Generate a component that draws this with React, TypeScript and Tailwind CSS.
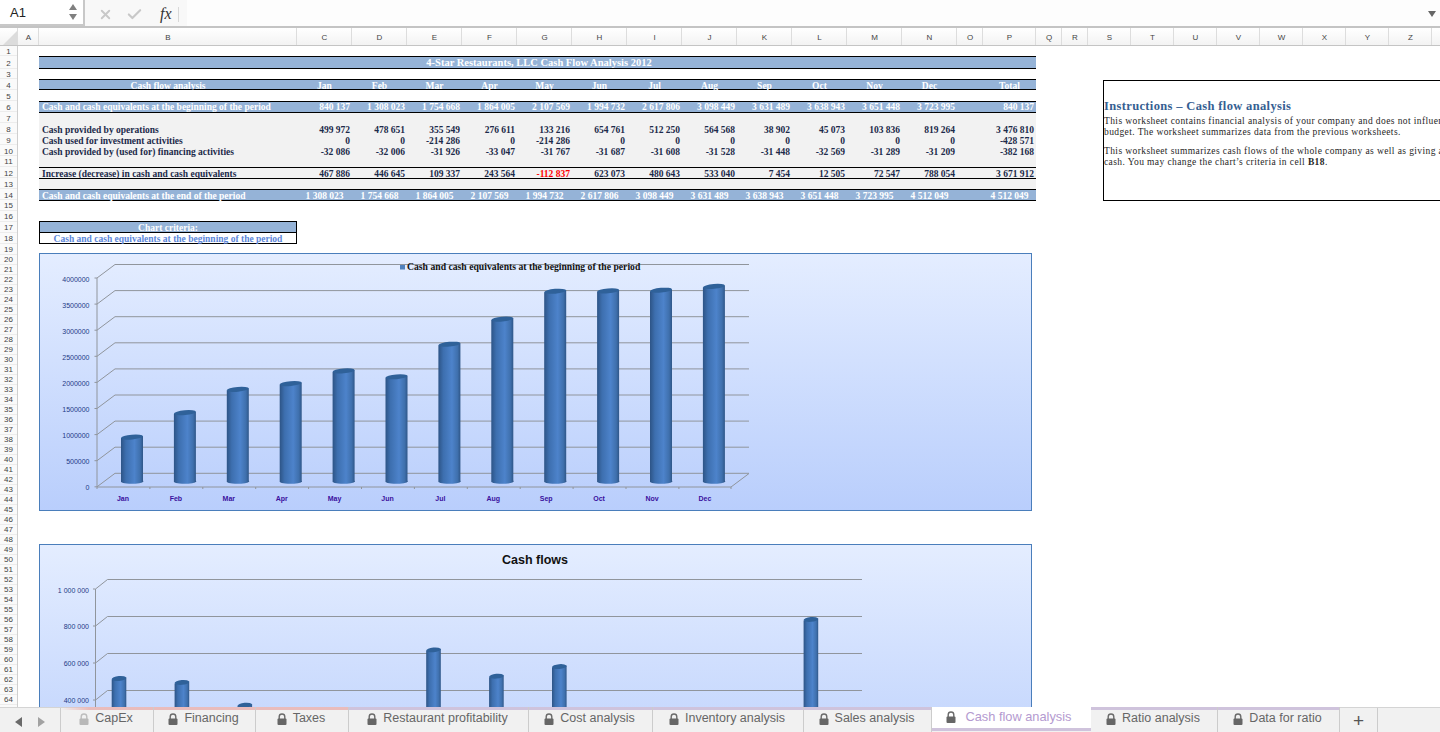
import { type FC } from "react";
import { Check, X } from "lucide-react";

const serif = "font-['Liberation_Serif',serif]";
const sans = "font-['Liberation_Sans',sans-serif]";

const COLUMNS = [
  { name: "A", cls: "w-[21px]" },
  { name: "B", cls: "w-[258px]" },
  { name: "C", cls: "w-[55px]" },
  { name: "D", cls: "w-[55px]" },
  { name: "E", cls: "w-[55px]" },
  { name: "F", cls: "w-[55px]" },
  { name: "G", cls: "w-[55px]" },
  { name: "H", cls: "w-[55px]" },
  { name: "I", cls: "w-[55px]" },
  { name: "J", cls: "w-[55px]" },
  { name: "K", cls: "w-[55px]" },
  { name: "L", cls: "w-[55px]" },
  { name: "M", cls: "w-[55px]" },
  { name: "N", cls: "w-[55px]" },
  { name: "O", cls: "w-[26px]" },
  { name: "P", cls: "w-[53px]" },
  { name: "Q", cls: "w-[26px]" },
  { name: "R", cls: "w-[26px]" },
  { name: "S", cls: "w-[43px]" },
  { name: "T", cls: "w-[43px]" },
  { name: "U", cls: "w-[43px]" },
  { name: "V", cls: "w-[43px]" },
  { name: "W", cls: "w-[43px]" },
  { name: "X", cls: "w-[43px]" },
  { name: "Y", cls: "w-[43px]" },
  { name: "Z", cls: "w-[43px]" },
];

const ROW_NUMBERS = Array.from({ length: 64 }, (_, i) => i + 1);

const MONTHS = ["Jan", "Feb", "Mar", "Apr", "May", "Jun", "Jul", "Aug", "Sep", "Oct", "Nov", "Dec"];

const BEGINNING = ["840 137", "1 308 023", "1 754 668", "1 864 005", "2 107 569", "1 994 732", "2 617 806", "3 098 449", "3 631 489", "3 638 943", "3 651 448", "3 723 995"];
const OPERATIONS = ["499 972", "478 651", "355 549", "276 611", "133 216", "654 761", "512 250", "564 568", "38 902", "45 073", "103 836", "819 264"];
const INVESTMENT = ["0", "0", "-214 286", "0", "-214 286", "0", "0", "0", "0", "0", "0", "0"];
const FINANCING = ["-32 086", "-32 006", "-31 926", "-33 047", "-31 767", "-31 687", "-31 608", "-31 528", "-31 448", "-32 569", "-31 289", "-31 209"];
const INCREASE = ["467 886", "446 645", "109 337", "243 564", "-112 837", "623 073", "480 643", "533 040", "7 454", "12 505", "72 547", "788 054"];
const ENDING = ["1 308 023", "1 754 668", "1 864 005", "2 107 569", "1 994 732", "2 617 806", "3 098 449", "3 631 489", "3 638 943", "3 651 448", "3 723 995", "4 512 049"];

const BEGIN_VALUES = [840137, 1308023, 1754668, 1864005, 2107569, 1994732, 2617806, 3098449, 3631489, 3638943, 3651448, 3723995];
const FLOW_VALUES = [499972, 478651, 355549, 276611, 133216, 654761, 512250, 564568, 38902, 45073, 103836, 819264];

const TABS = [
  { label: "CapEx", w: "w-[93px]", strip: "bg-gradient-to-r from-transparent to-[#e9bcbc] to-30%", faded: true },
  { label: "Financing", w: "w-[102px]", strip: "bg-[#e9bcbc]" },
  { label: "Taxes", w: "w-[93px]", strip: "bg-[#e9bcbc]" },
  { label: "Restaurant profitability", w: "w-[180px]", strip: "bg-[#cfc3dc]" },
  { label: "Cost analysis", w: "w-[124px]", strip: "bg-[#cfc3dc]" },
  { label: "Inventory analysis", w: "w-[151px]", strip: "bg-[#cfc3dc]" },
  { label: "Sales analysis", w: "w-[128px]", strip: "bg-[#cfc3dc]" },
  { label: "Cash flow analysis", w: "w-[159px]", strip: "", active: true },
  { label: "Ratio analysis", w: "w-[127px]", strip: "bg-[#cfc3dc]" },
  { label: "Data for ratio", w: "w-[122px]", strip: "bg-[#cfc3dc]" },
];

const Lock: FC<{ faded?: boolean }> = ({ faded }) => (
  <svg width="10" height="12" viewBox="0 0 10 12" className="shrink-0">
    <path d="M2.2 6V3.8a2.8 2.8 0 0 1 5.6 0V6" fill="none" stroke={faded ? "#bdbdbd" : "#6a6a6a"} strokeWidth="1.4" />
    <rect x="0.5" y="5.5" width="9" height="6.5" rx="1" fill={faded ? "#b8b8b8" : "#666666"} />
  </svg>
);

const FormulaBar = () => (
  <div className="flex h-[28px] items-start border-b-2 border-[#c4c4c4] bg-[#f8f8f8]">
    <div className={`${sans} flex h-[26px] w-[85px] items-center justify-between border-r-2 border-b-2 border-[#c8c8c8] bg-white pt-[2px] pr-[5px] pl-[10px] text-[13px] text-[#222]`}>
      A1
      <svg width="10" height="18" viewBox="0 0 10 18" className="mt-[-2px]">
        <path d="M5 1 9 7H1z" fill="#808080" />
        <path d="M5 17 9 11H1z" fill="#808080" />
      </svg>
    </div>
    <div className="flex h-[26px] w-[102px] items-center pt-[2px] pl-[13px]">
      <X size={15} strokeWidth={3} className="text-[#c8c8c8]" />
      <Check size={17} strokeWidth={3} className="ml-[13px] text-[#c8c8c8]" />
      <span className={`${serif} ml-[17px] text-[16px] text-[#333] italic`}>fx</span>
      <span className="ml-[6px] h-[15px] w-px bg-[#d8d8d8]" />
    </div>
    <div className="flex h-[26px] flex-1 items-center justify-end bg-[#fdfdfd] pt-[2px] pr-[4px]">
      <svg width="8" height="6" viewBox="0 0 8 6">
        <path d="M0 0h8L4 6z" fill="#666666" />
      </svg>
    </div>
  </div>
);

const ColumnHeaders = () => (
  <div className={`${sans} flex h-[18px] border-b border-[#c4c4c4] bg-gradient-to-b from-white to-[#f3f3f3] text-[8px] text-[#444]`}>
    <div className="flex w-[18px] shrink-0 items-end justify-end border-r border-[#dddddd]">
      <svg width="14" height="14" viewBox="0 0 14 14">
        <path d="M14 0v14H0z" fill="#dcdcdc" />
      </svg>
    </div>
    {COLUMNS.map((c) => (
      <div key={c.name} className={`${c.cls} flex shrink-0 items-center justify-center border-r border-[#dddddd] pt-[3px] pl-px`}>
        {c.name}
      </div>
    ))}
  </div>
);

const rowNumberClass = (n: number) => {
  if (n === 2) return "h-[13px] pt-[4px]";
  if (n === 1 || n === 3) return "h-[10px] pt-[2px]";
  if (n >= 20) return "h-[10px] pt-px";
  if (n === 11 || n >= 15) return "h-[11px] pt-[2px]";
  return "h-[11px] pt-[3px]";
};

const RowNumbers = () => (
  <div className={`${sans} w-[18px] shrink-0 border-r border-[#cfcfcf] bg-[#fafafa] text-[8px] leading-none text-[#444]`}>
    {ROW_NUMBERS.map((n) => (
      <div key={n} className={`border-b border-[#ececec] text-center ${rowNumberClass(n)}`}>
        {n}
      </div>
    ))}
  </div>
);

const Cells: FC<{ values: string[]; last: string; align?: string; redIndex?: number }> = ({
  values,
  last,
  align = "text-right pr-[2px]",
  redIndex,
}) => (
  <>
    {values.map((v, i) => (
      <div key={i} className={`${align} ${i === redIndex ? "text-[#ff0000]" : ""}`}>
        {v}
      </div>
    ))}
    <div />
    <div className={align}>{last}</div>
  </>
);

const rowGrid = "grid grid-cols-[258px_repeat(12,55px)_26px_53px] content-start";
const bandText = "border-y border-black bg-[#95b3d7] text-white";
const bodyText = "bg-[#f2f2f2] text-[#1c2a4a]";

const DataTable = () => (
  <div className={`${serif} w-[997px] text-[9.5px] leading-none font-bold`}>
    <div className={`${bandText} h-[13px] pt-px pl-[3px] text-center text-[10.5px]`}>
      4-Star Restaurants, LLC Cash Flow Analysis 2012
    </div>
    <div className="h-[10px]" />
    <div className={`${rowGrid} ${bandText} h-[11px] pt-[2px]`}>
      <div className="text-center">Cash flow analysis</div>
      <Cells values={MONTHS} last="Total" align="text-center" />
    </div>
    <div className="h-[11px]" />
    <div className={`${rowGrid} ${bandText} h-[12px] pt-px`}>
      <div className="pl-[3px]">Cash and cash equivalents at the beginning of the period</div>
      <Cells values={BEGINNING} last="840 137" />
    </div>
    <div className={`${bodyText} h-[11px]`} />
    <div className={`${rowGrid} ${bodyText} h-[11px] pt-[2px]`}>
      <div className="pl-[3px]">Cash provided by operations</div>
      <Cells values={OPERATIONS} last="3 476 810" />
    </div>
    <div className={`${rowGrid} ${bodyText} h-[11px] pt-[2px]`}>
      <div className="pl-[3px]">Cash used for investment activities</div>
      <Cells values={INVESTMENT} last="-428 571" />
    </div>
    <div className={`${rowGrid} ${bodyText} h-[11px] pt-[2px]`}>
      <div className="pl-[3px]">Cash provided by (used for) financing activities</div>
      <Cells values={FINANCING} last="-382 168" />
    </div>
    <div className={`${bodyText} h-[10px]`} />
    <div className={`${rowGrid} ${bodyText} h-[12px] border-y border-black pt-[2px]`}>
      <div className="pl-[3px]">Increase (decrease) in cash and cash equivalents</div>
      <Cells values={INCREASE} last="3 671 912" redIndex={4} />
    </div>
    <div className={`${bodyText} h-[10px]`} />
    <div className={`${rowGrid} ${bandText} h-[12px] pt-[2px]`}>
      <div className="pl-[3px]">Cash and cash equivalents at the end of the period</div>
      <Cells values={ENDING} last="4 512 049" align="text-center" />
    </div>
  </div>
);

const InstructionsBox = () => (
  <div className={`${serif} mt-[24px] ml-[67px] h-[121px] w-[400px] shrink-0 border border-black pt-[19px] text-[9.5px] leading-[11px] tracking-[0.4px] whitespace-nowrap text-[#262626]`}>
    <div className="mb-[4px] text-[12.5px] leading-[12px] font-bold tracking-[0.35px] text-[#366092]">
      Instructions – Cash flow analysis
    </div>
    <div>This worksheet contains financial analysis of your company and does not influence</div>
    <div>budget. The worksheet summarizes data from the previous worksheets.</div>
    <div className="mt-[8px]">This worksheet summarizes cash flows of the whole company as well as giving a</div>
    <div>
      cash. You may change the chart’s criteria in cell <b>B18</b>.
    </div>
  </div>
);

const ChartCriteria = () => (
  <div className={`${serif} mt-[20px] w-[258px] border border-black text-center text-[9.5px] leading-none font-bold`}>
    <div className="h-[11px] border-b border-black bg-[#95b3d7] pt-[2px] text-white">Chart criteria:</div>
    <div className="h-[10px] bg-white pt-[2px] text-[#5b86d9]">
      Cash and cash equivalents at the beginning of the period
    </div>
  </div>
);

const Cylinder: FC<{ x: number; top: number; bottom: number; w: number }> = ({ x, top, bottom, w }) => {
  const rx = w / 2;
  return (
    <g>
      <path
        d={`M${x} ${top + 1}L${x} ${bottom}A${rx} 2.5 0 0 0 ${x + w} ${bottom - 1.5}L${x + w} ${top - 1}Z`}
        fill="url(#cyl)"
      />
      <ellipse cx={x + rx} cy={top} rx={rx} ry="2.4" transform={`rotate(-5 ${x + rx} ${top})`} fill="#2f6199" />
    </g>
  );
};

const CylinderGradient = () => (
  <defs>
    <linearGradient id="cyl" x1="0" y1="0" x2="1" y2="0">
      <stop offset="0" stopColor="#2d5486" />
      <stop offset="0.22" stopColor="#3d6faf" />
      <stop offset="0.6" stopColor="#4d83cb" />
      <stop offset="0.85" stopColor="#3f70ad" />
      <stop offset="1" stopColor="#2c5282" />
    </linearGradient>
  </defs>
);

const LINE = "#90959c";
const axisFont = "'Liberation Sans', sans-serif";

const BeginningChart = () => {
  const levels = Array.from({ length: 9 }, (_, i) => i);
  return (
    <div className="mt-[9px] h-[258px] w-[993px] border border-[#4a7ebb] bg-gradient-to-b from-[#e4edff] to-[#b9cefc]">
      <svg width="991" height="256" viewBox="40 254 991 256" className="block">
        <CylinderGradient />
        {levels.map((i) => {
          const back = 264.5 + i * 26.1;
          const front = 278 + i * 26.1;
          return (
            <g key={i} stroke={LINE} strokeWidth="1" fill="none">
              <path d={`M115 ${back}H749`} />
              <path d={`M97 ${front}L115 ${back}`} />
              <path d={`M94.5 ${front}H97`} />
            </g>
          );
        })}
        <path d="M97 278V487H731L749 473.5" stroke={LINE} fill="none" />
        {MONTHS.map((m, i) => (
          <path key={m} d={`M${97 + i * 52.9} 487v2`} stroke={LINE} />
        ))}
        <path d="M731 487v2" stroke={LINE} />
        {levels.map((i) => (
          <text key={i} x="89.5" y={281.5 + i * 26.1} textAnchor="end" fontSize="7" fill="#1f3a86" fontFamily={axisFont}>
            {(4000000 - i * 500000).toString()}
          </text>
        ))}
        {BEGIN_VALUES.map((v, i) => (
          <Cylinder key={i} x={121 + i * 52.9} top={481 - (v / 4000000) * 209} bottom={482} w={22} />
        ))}
        {MONTHS.map((m, i) => (
          <text key={m} x={123 + i * 52.9} y="500.5" textAnchor="middle" fontSize="7" fontWeight="700" fill="#3a109e" fontFamily={axisFont}>
            {m}
          </text>
        ))}
        <rect x="400" y="265" width="5" height="4.5" fill="#4f81bd" />
        <text x="407" y="270" fontSize="9.7" fontWeight="700" fill="#111111" fontFamily="'Liberation Serif', serif">
          Cash and cash equivalents at the beginning of the period
        </text>
      </svg>
    </div>
  );
};

const FlowChart = () => {
  const levels = Array.from({ length: 6 }, (_, i) => i);
  return (
    <div className="mt-[33px] h-[258px] w-[993px] shrink-0 border border-[#4a7ebb] bg-gradient-to-b from-[#e4edff] to-[#b9cefc]">
      <svg width="991" height="256" viewBox="40 545 991 256" className="block">
        <CylinderGradient />
        <text x="535" y="564" textAnchor="middle" fontSize="12.5" fontWeight="700" fill="#111111" fontFamily={axisFont}>
          Cash flows
        </text>
        {levels.map((i) => {
          const back = 579.5 + i * 37;
          const front = 589 + i * 37;
          return (
            <g key={i} stroke={LINE} strokeWidth="1" fill="none">
              <path d={`M107.5 ${back}H862`} />
              <path d={`M95.5 ${front}L107.5 ${back}`} />
              <path d={`M93 ${front}H95.5`} />
            </g>
          );
        })}
        <path d="M95.5 589V790" stroke={LINE} fill="none" />
        {["1 000 000", "800 000", "600 000", "400 000"].map((t, i) => (
          <text key={t} x="89" y={592.5 + i * 36.8} textAnchor="end" fontSize="7" fill="#1f3a86" fontFamily={axisFont}>
            {t}
          </text>
        ))}
        {FLOW_VALUES.map((v, i) => (
          <Cylinder key={i} x={111.7 + i * 62.9} top={771 - (v / 1000000) * 185} bottom={800} w={14.6} />
        ))}
      </svg>
    </div>
  );
};

const TabBar = () => (
  <div className={`${sans} flex h-[25px] shrink-0 border-t border-[#d4d4d4] bg-[#f1f1f1] text-[12.5px] leading-none text-[#666]`}>
    <div className="flex w-[61px] shrink-0 items-center gap-[16px] border-r border-[#cccccc] pt-[3px] pl-[15px]">
      <svg width="7" height="10" viewBox="0 0 7 10">
        <path d="M7 0v10L0 5z" fill="#6a6a6a" />
      </svg>
      <svg width="7" height="10" viewBox="0 0 7 10">
        <path d="M0 0v10l7-5z" fill="#a2a2a2" />
      </svg>
    </div>
    {TABS.map((t) =>
      t.active ? (
        <div key={t.label} className={`${t.w} mt-[-1px] h-[24px] shrink-0 border-b-[3px] border-[#cfc3dc] bg-white`}>
          <div className="flex h-[20px] items-center justify-center gap-[10px] pr-[6px]">
            <Lock />
            <span className="text-[12.8px] text-[#b49ad0]">{t.label}</span>
          </div>
        </div>
      ) : (
        <div key={t.label} className={`${t.w} mt-[-1px] shrink-0 border-r border-[#cccccc]`}>
          <div className={`${t.strip} h-[3px]`} />
          <div className="flex h-[17px] items-center justify-center gap-[6px] pr-[2px]">
            <Lock faded={t.faded} />
            {t.label}
          </div>
        </div>
      ),
    )}
    <div className="flex w-[38px] shrink-0 items-center justify-center border-r border-[#cccccc] text-[19px] text-[#555]">
      +
    </div>
  </div>
);

export default function App() {
  return (
    <div className="flex h-screen w-screen flex-col overflow-hidden bg-white">
      <FormulaBar />
      <ColumnHeaders />
      <div className="flex min-h-0 flex-1 overflow-hidden">
        <RowNumbers />
        <div className="flex min-w-0 flex-1 flex-col pt-[10px] pl-[21px]">
          <div className="flex">
            <DataTable />
            <InstructionsBox />
          </div>
          <ChartCriteria />
          <BeginningChart />
          <FlowChart />
        </div>
      </div>
      <TabBar />
    </div>
  );
}
